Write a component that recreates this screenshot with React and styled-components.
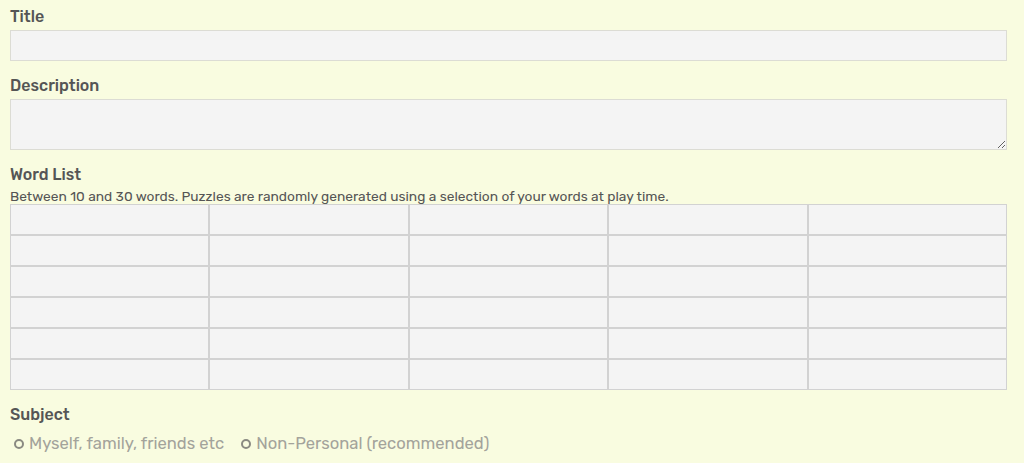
import React from 'react'
import styled, { createGlobalStyle } from 'styled-components'

const GlobalStyle = createGlobalStyle`
  html, body {
    margin: 0;
    background: #f9fce0;
  }
  body {
    font-family: 'Rubik', 'Open Sans', 'Noto Sans', sans-serif;
  }
`

function App() {
  const rows = Array.from({ length: 6 })
  const cols = Array.from({ length: 5 })

  return (
    <>
      <GlobalStyle />
      <Form>
        <Field>
          <Label>Title</Label>
          <TextInput type="text" />
        </Field>
        <Field>
          <Label>Description</Label>
          <TextArea />
        </Field>
        <Field>
          <Label>Word List</Label>
          <Hint>Between 10 and 30 words. Puzzles are randomly generated using a selection of your words at play time.</Hint>
          <WordGrid>
            {rows.map((_, r) =>
              cols.map((_, c) => <WordCell key={r + '-' + c} type="text" />)
            )}
          </WordGrid>
        </Field>
        <Field>
          <Label>Subject</Label>
          <Radios>
            <RadioLabel><Circle />Myself, family, friends etc</RadioLabel>
            <RadioLabel><Circle />Non-Personal (recommended)</RadioLabel>
          </Radios>
        </Field>
      </Form>
    </>
  )
}

export default App

const Form = styled.div`
  padding: 8px 17px 0 10px;
  display: flex;
  flex-direction: column;
  gap: 16px;
`

const Field = styled.div`
  display: flex;
  flex-direction: column;
`

const Label = styled.div`
  font-size: 16px;
  font-weight: 500;
  color: #555;
  line-height: 18px;
  margin-bottom: 4px;
`

const Hint = styled.div`
  font-size: 13.75px;
  color: #555;
  line-height: 16px;
`

const TextInput = styled.input`
  box-sizing: border-box;
  width: 100%;
  height: 31px;
  border: 1px solid #dcdcd4;
  background: #f4f4f4;
  margin: 0;
  outline: none;
`

const TextArea = styled.textarea`
  box-sizing: border-box;
  width: 100%;
  height: 51px;
  border: 1px solid #dcdcd4;
  background: #f4f4f4;
  margin: 0;
  display: block;
  outline: none;
`

const WordGrid = styled.div`
  display: grid;
  grid-template-columns: repeat(5, 1fr);
`

const WordCell = styled.input`
  box-sizing: border-box;
  width: 100%;
  min-width: 0;
  height: 31px;
  margin: 0;
  border: 1px solid #d2d2d2;
  background: #f4f4f4;
  outline: none;
`

const Radios = styled.div`
  display: flex;
  gap: 17px;
  padding-left: 4px;
  margin-top: 6px;
  line-height: 19px;
`

const RadioLabel = styled.label`
  display: flex;
  align-items: center;
  gap: 5px;
  font-size: 16.6px;
  color: #a3a39b;
`

const Circle = styled.span`
  box-sizing: border-box;
  width: 10px;
  height: 10px;
  border-radius: 50%;
  border: 2.5px solid #8a8a82;
  display: inline-block;
`
